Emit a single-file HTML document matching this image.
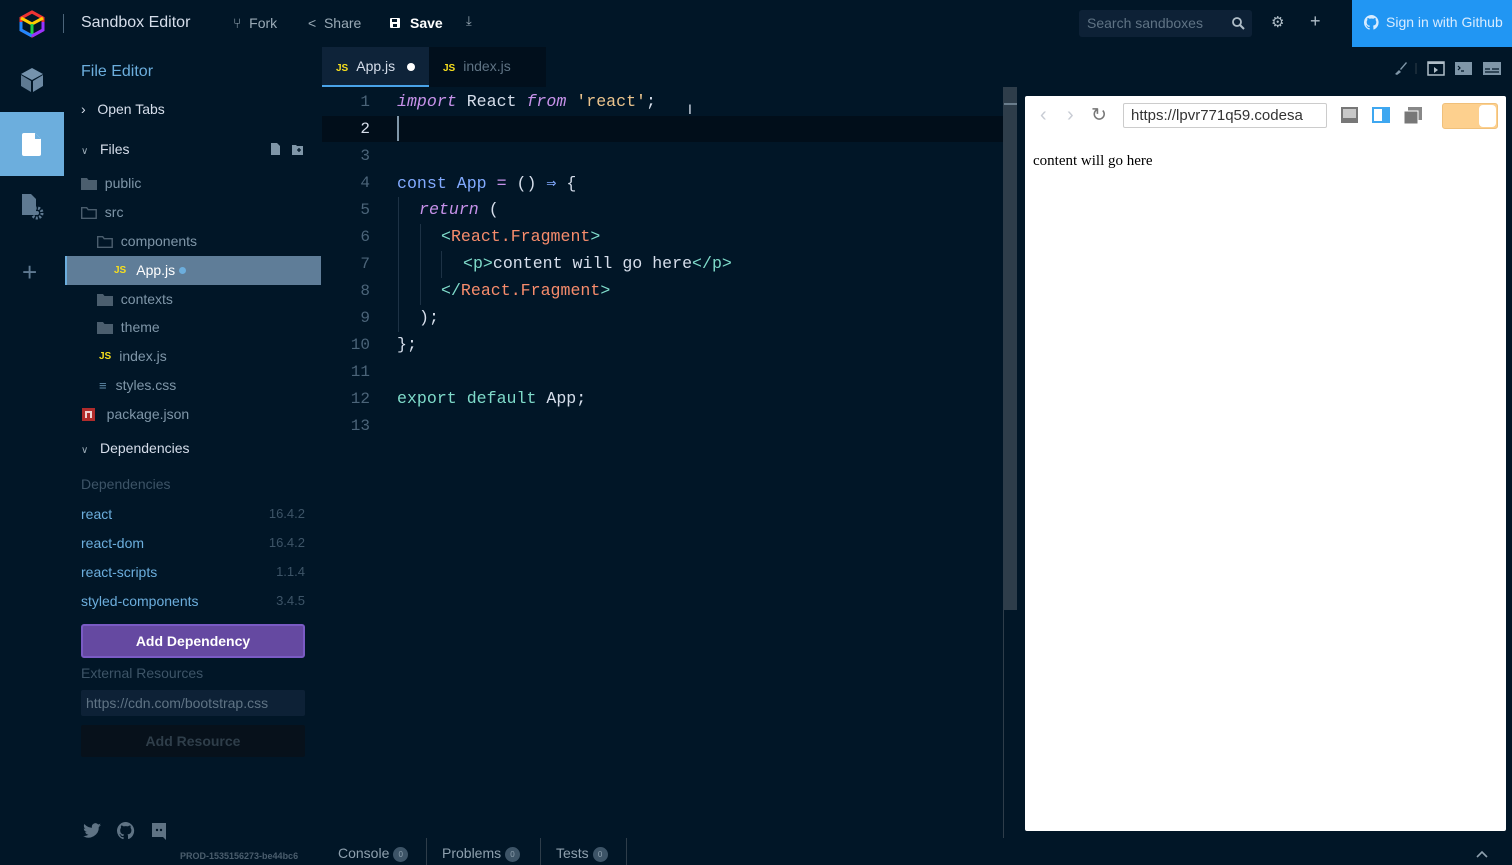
<!DOCTYPE html>
<html><head><meta charset="utf-8"><style>
*{box-sizing:border-box;margin:0;padding:0}
body{width:1512px;height:865px;background:#011627;font-family:"Liberation Sans",sans-serif;position:relative;overflow:hidden;color:#d6deeb}
.a{position:absolute}
.ln{position:absolute;left:330px;width:40px;text-align:right;color:#4b6479;font-family:"Liberation Mono",monospace;font-size:16px}
.cl{position:absolute;left:397px;white-space:pre;font-family:"Liberation Mono",monospace;font-size:16.6px;color:#d6deeb}
.tr{position:absolute;font-size:14px;color:#637777;display:flex;align-items:center}
.tr span{color:#7f96a8}
.dep{position:absolute;left:81px;width:224px;font-size:14px;color:#6caedd;display:flex;justify-content:space-between}
.dep i{font-style:normal;color:#3d5467;font-size:13px}
.js{color:#f7df1e;font-weight:bold;font-size:10px;margin-right:8px}
</style></head><body>
<svg class="a" style="left:18px;top:10px" width="28" height="28" viewBox="0 0 28 28">
<polygon points="14,2 25,8 25,20 14,26 3,20 3,8" fill="none" stroke="#e33" stroke-width="3"/>
<polyline points="3,8 14,14 25,8" fill="none" stroke="#fc0" stroke-width="3"/>
<line x1="14" y1="14" x2="14" y2="26" stroke="#2c4" stroke-width="3"/>
<polyline points="3,12 3,20 14,26" fill="none" stroke="#28f" stroke-width="3"/>
<polyline points="25,12 25,20 14,26" fill="none" stroke="#93f" stroke-width="3"/>
</svg>
<div class="a" style="left:63px;top:14px;width:1px;height:19px;background:#4b6479"></div>
<div class="a" style="left:81px;top:14px;font-size:16px;color:#d6deeb">Sandbox Editor</div>
<div class="a" style="left:233px;top:15px;font-size:14px;color:#9aaab6">&#x2442;&nbsp; Fork</div>
<div class="a" style="left:308px;top:15px;font-size:14px;color:#9aaab6">&lt;&nbsp; Share</div>
<svg class="a" style="left:389px;top:17px" width="12" height="12"><rect x="1" y="1" width="10" height="10" rx="1" fill="#fff"/><rect x="3" y="2" width="5" height="3" fill="#011627"/><rect x="4" y="7" width="4" height="3" fill="#011627"/></svg>
<div class="a" style="left:410px;top:15px;font-size:14px;color:#fff;font-weight:bold">Save</div>
<div class="a" style="left:466px;top:13px;font-size:13px;color:#9aaab6">&#x2913;</div>
<div class="a" style="left:1079px;top:10px;width:173px;height:27px;background:#0d2136;border-radius:3px"></div>
<div class="a" style="left:1087px;top:15px;font-size:14px;color:#5f7384">Search sandboxes</div>
<svg class="a" style="left:1232px;top:17px" width="13" height="13"><circle cx="5" cy="5" r="4" fill="none" stroke="#b0bec8" stroke-width="1.8"/><line x1="8" y1="8" x2="12" y2="12" stroke="#b0bec8" stroke-width="2"/></svg>
<div class="a" style="left:1271px;top:13px;font-size:15px;color:#b0bec8">&#x2699;</div>
<div class="a" style="left:1310px;top:11px;font-size:18px;color:#b0bec8">+</div>
<div class="a" style="left:1352px;top:0;width:160px;height:47px;background:#2196f3"></div>
<svg class="a" style="left:1364px;top:15px" width="15" height="15" viewBox="0 0 16 16"><path fill="#d8ecff" d="M8 0a8 8 0 0 0-2.5 15.6c.4 0 .5-.2.5-.4v-1.5c-2.2.5-2.7-1-2.7-1-.4-.9-.9-1.2-.9-1.2-.7-.5.1-.5.1-.5.8.1 1.2.8 1.2.8.7 1.3 1.9.9 2.300.7.1-.5.3-.9.5-1.100-1.800-.2-3.600-.9-3.600-4 0-.9.3-1.600.8-2.100-.1-.2-.4-1 .1-2.100 0 0 .7-.2 2.200.8a7.500 7.500 0 0 1 4 0c1.500-1 2.200-.8 2.200-.8.4 1.100.2 1.900.1 2.100.5.6.8 1.300.8 2.100 0 3.100-1.900 3.700-3.600 3.900.3.3.5.8.5 1.500v2.200c0 .2.1.5.6.4A8 8 0 0 0 8 0z"/></svg>
<div class="a" style="left:1386px;top:14px;font-size:14px;color:#d8ecff">Sign in with Github</div>

<svg class="a" style="left:20px;top:67px" width="24" height="26" viewBox="0 0 24 26"><polygon points="12,1 23,7 12,13 1,7" fill="#7593ad"/><polygon points="1,8 11,14 11,25 1,19" fill="#5f7a92"/><polygon points="23,8 13,14 13,25 23,19" fill="#6c89a3"/></svg>
<div class="a" style="left:0;top:112px;width:64px;height:64px;background:#6caedd"></div>
<svg class="a" style="left:22px;top:133px" width="20" height="23"><path d="M2 0h11l6 6v15a2 2 0 0 1-2 2H2a2 2 0 0 1-2-2V2a2 2 0 0 1 2-2z" fill="#fff"/><path d="M13 0v6h6z" fill="#6caedd"/></svg>
<svg class="a" style="left:20px;top:194px" width="25" height="26"><path d="M2 0h9l5 5v16H2z" fill="#5f7a92"/><circle cx="17" cy="19" r="5" fill="none" stroke="#5f7a92" stroke-width="3" stroke-dasharray="2 1.5"/><circle cx="17" cy="19" r="2" fill="#5f7a92"/></svg>
<div class="a" style="left:22px;top:257px;font-size:26px;color:#5f7a92;font-weight:300">+</div>

<div class="a" style="left:81px;top:63px;font-size:16px;color:#6caedd">File Editor</div>
<div class="a" style="left:81px;top:101px;font-size:14px;color:#d6deeb">&#x203A;&nbsp;&nbsp; Open Tabs</div>
<div class="a" style="left:81px;top:141px;font-size:14px;color:#d6deeb"><span style="font-size:10px;color:#9aaab6">&#x2228;</span>&nbsp;&nbsp; Files</div>
<svg class="a" style="left:271px;top:143px" width="36" height="13"><path d="M0 0h6l3 3v9H0z" fill="#7f96a8"/><path d="M21 2h4l1 1h6v9H21z" fill="#7f96a8"/><path d="M26 7h4M28 5v4" stroke="#011627" stroke-width="1.3"/></svg>

<div class="tr" style="left:81px;top:175px"><svg width="16" height="13"><path d="M0 1h6l1.5 2H16v10H0z" fill="#4b5e6e"/></svg>&nbsp;&nbsp;<span>public</span></div>
<div class="tr" style="left:81px;top:204px"><svg width="16" height="13"><path d="M.7 1.7h5l1.5 2h8v8.6H.7z" fill="none" stroke="#4b5e6e" stroke-width="1.4"/></svg>&nbsp;&nbsp;<span>src</span></div>
<div class="tr" style="left:97px;top:233px"><svg width="16" height="13"><path d="M.7 1.7h5l1.5 2h8v8.6H.7z" fill="none" stroke="#4b5e6e" stroke-width="1.4"/></svg>&nbsp;&nbsp;<span>components</span></div>
<div class="a" style="left:65px;top:256px;width:256px;height:29px;background:#5f7d98;border-left:2px solid #6caedd"></div>
<div class="tr" style="left:114px;top:262px"><b class="js" style="margin-right:10px">JS</b><span style="color:#fff">App.js</span>&nbsp;<span style="display:inline-block;width:7px;height:7px;border-radius:50%;background:#6caedd"></span></div>
<div class="tr" style="left:97px;top:291px"><svg width="16" height="13"><path d="M0 1h6l1.5 2H16v10H0z" fill="#4b5e6e"/></svg>&nbsp;&nbsp;<span>contexts</span></div>
<div class="tr" style="left:97px;top:319px"><svg width="16" height="13"><path d="M0 1h6l1.5 2H16v10H0z" fill="#4b5e6e"/></svg>&nbsp;&nbsp;<span>theme</span></div>
<div class="tr" style="left:99px;top:348px"><b class="js">JS</b><span>index.js</span></div>
<div class="tr" style="left:99px;top:377px"><span style="color:#5f8aa8;font-weight:bold;font-size:13px;margin-right:9px">&#x2261;</span><span>styles.css</span></div>
<div class="tr" style="left:82px;top:406px"><svg width="13" height="13"><rect width="13" height="13" fill="#b02c2c"/><path d="M3 10V3h7v7H8V5H5v5z" fill="#fff" opacity=".8"/></svg>&nbsp;&nbsp;&nbsp;<span>package.json</span></div>
<div class="a" style="left:81px;top:440px;font-size:14px;color:#d6deeb"><span style="font-size:10px;color:#9aaab6">&#x2228;</span>&nbsp;&nbsp; Dependencies</div>
<div class="a" style="left:81px;top:476px;font-size:14px;color:#3d5467">Dependencies</div>
<div class="dep" style="top:506px">react<i>16.4.2</i></div>
<div class="dep" style="top:535px">react-dom<i>16.4.2</i></div>
<div class="dep" style="top:564px">react-scripts<i>1.1.4</i></div>
<div class="dep" style="top:593px">styled-components<i>3.4.5</i></div>
<div class="a" style="left:81px;top:624px;width:224px;height:34px;background:#6549a1;border:2px solid #7a5bc4;border-radius:3px;color:#fff;font-weight:bold;font-size:14px;text-align:center;line-height:30px">Add Dependency</div>
<div class="a" style="left:81px;top:665px;font-size:14px;color:#3d5467">External Resources</div>
<div class="a" style="left:81px;top:690px;width:224px;height:26px;background:#0d2136;border-radius:2px;font-size:14px;color:#5f7384;padding:5px 5px">https://cdn.com/bootstrap.css</div>
<div class="a" style="left:81px;top:725px;width:224px;height:32px;background:#07111b;border-radius:2px;font-size:14px;color:#2f3e4a;font-weight:bold;text-align:center;line-height:32px">Add Resource</div>
<svg class="a" style="left:82px;top:822px" width="88" height="18">
<path fill="#5f7384" d="M19 3c-.7.3-1.4.5-2.1.6.8-.5 1.3-1.2 1.6-2-.7.4-1.5.7-2.3.9a3.6 3.6 0 0 0-6.2 3.3C6.9 5.6 4.2 4.2 2.4 2c-1 1.7-.5 3.8 1.1 4.9-.6 0-1.2-.2-1.7-.5 0 1.8 1.3 3.3 3 3.6-.5.1-1.1.2-1.7.1.5 1.5 1.9 2.5 3.4 2.5A7.3 7.3 0 0 1 1 14a10.3 10.3 0 0 0 15.8-9.1c.9-.5 1.6-1.2 2.2-1.9z"/>
<path fill="#5f7384" transform="translate(35,0) scale(1.1)" d="M8 0a8 8 0 0 0-2.5 15.6c.4 0 .5-.2.5-.4v-1.5c-2.2.5-2.7-1-2.7-1-.4-.9-.9-1.2-.9-1.2-.7-.5.1-.5.1-.5.8.1 1.2.8 1.2.8.7 1.3 1.9.9 2.3.7.1-.5.3-.9.5-1.1-1.8-.2-3.6-.9-3.6-4 0-.9.3-1.6.8-2.1-.1-.2-.4-1 .1-2.1 0 0 .7-.2 2.2.8a7.5 7.5 0 0 1 4 0c1.5-1 2.2-.8 2.2-.8.4 1.1.2 1.9.1 2.1.5.6.8 1.3.8 2.1 0 3.1-1.9 3.7-3.6 3.9.3.3.5.8.5 1.5v2.2c0 .2.1.5.6.4A8 8 0 0 0 8 0z"/>
<path fill="#5f7384" d="M70 1h14v17l-3-3H70z"/><circle cx="75" cy="8" r="1.2" fill="#011627"/><circle cx="79" cy="8" r="1.2" fill="#011627"/>
</svg>
<div class="a" style="left:180px;top:851px;font-size:9px;color:#4b5e6e;font-weight:bold">PROD-1535156273-be44bc6</div>

<div class="a" style="left:322px;top:47px;width:107px;height:40px;background:#0e2339;border-bottom:2px solid #4aa3e8"></div>
<div class="a" style="left:336px;top:58px;font-size:14px;color:#d6deeb"><b class="js">JS</b>App.js</div>
<div class="a" style="left:407px;top:63px;width:8px;height:8px;border-radius:50%;background:#fff"></div>
<div class="a" style="left:429px;top:47px;width:117px;height:40px;background:#010f1c"></div>
<div class="a" style="left:443px;top:58px;font-size:14px;color:#5f7384"><b class="js">JS</b>index.js</div>
<svg class="a" style="left:1393px;top:61px" width="110" height="15"><path d="M2 13l4-4 2 2-4 3zM7 8l6-7 1 1-6 7z" fill="#7f96a8"/><line x1="23" y1="2" x2="23" y2="13" stroke="#2e3d4a"/>
<rect x="35" y="1" width="16" height="13" fill="none" stroke="#b0bec8" stroke-width="1.5"/><rect x="35" y="1" width="16" height="2" fill="#b0bec8"/><path d="M41 6l4 3-4 3z" fill="#b0bec8"/>
<rect x="62" y="1" width="17" height="13" fill="#7f96a8"/><path d="M65 5l2 2-2 2M68 10h3" stroke="#011627" fill="none" stroke-width="1.2"/>
<rect x="90" y="1" width="18" height="13" fill="#7f96a8"/><path d="M92 8h5M99 8h7M92 11h14" stroke="#011627" stroke-width="1.2"/></svg>

<div class="a" style="left:322px;top:116px;width:681px;height:26px;background:#010e1a"></div>
<div class="a" style="left:397px;top:116px;width:2px;height:25px;background:#7f96a8"></div>
<div class="a" style="left:398px;top:197px;width:1px;height:135px;background:#1d3245"></div>
<div class="a" style="left:420px;top:224px;width:1px;height:81px;background:#1d3245"></div>
<div class="a" style="left:441px;top:251px;width:1px;height:27px;background:#1d3245"></div>
<div class="ln" style="top:93px">1</div><div class="ln" style="top:120px;color:#d6deeb">2</div><div class="ln" style="top:147px">3</div><div class="ln" style="top:174px">4</div><div class="ln" style="top:201px">5</div><div class="ln" style="top:228px">6</div><div class="ln" style="top:255px">7</div><div class="ln" style="top:282px">8</div><div class="ln" style="top:309px">9</div><div class="ln" style="top:336px">10</div><div class="ln" style="top:363px">11</div><div class="ln" style="top:390px">12</div><div class="ln" style="top:417px">13</div>
<div class="cl" style="top:92px"><i style="color:#c792ea">import</i> React <i style="color:#c792ea">from</i> <span style="color:#ecc48d">'react'</span>;</div>
<div class="cl" style="top:173px"><span style="color:#82aaff">const</span> <span style="color:#82aaff">App</span> <span style="color:#c792ea">=</span> () <span style="color:#82aaff">&#x21D2;</span> {</div>
<div class="cl" style="top:200px;left:419px"><i style="color:#c792ea">return</i> (</div>
<div class="cl" style="top:227px;left:441px"><span style="color:#7fdbca">&lt;</span><span style="color:#f78c6c">React.Fragment</span><span style="color:#7fdbca">&gt;</span></div>
<div class="cl" style="top:254px;left:463px"><span style="color:#7fdbca">&lt;p&gt;</span>content will go here<span style="color:#7fdbca">&lt;/p&gt;</span></div>
<div class="cl" style="top:281px;left:441px"><span style="color:#7fdbca">&lt;/</span><span style="color:#f78c6c">React.Fragment</span><span style="color:#7fdbca">&gt;</span></div>
<div class="cl" style="top:308px;left:419px">);</div>
<div class="cl" style="top:335px">};</div>
<div class="cl" style="top:389px"><span style="color:#7fdbca">export</span> <span style="color:#7fdbca">default</span> App;</div>
<div class="a" style="left:688px;top:101px;font-size:14px;color:#d6deeb">I</div>

<div class="a" style="left:1003px;top:87px;width:14px;height:523px;background:#2e3d4a"></div>
<div class="a" style="left:1004px;top:103px;width:13px;height:2px;background:#6a7d8c"></div>
<div class="a" style="left:1003px;top:610px;width:1px;height:228px;background:#2e3d4a"></div>

<div class="a" style="left:1025px;top:96px;width:481px;height:735px;background:#fff;border-radius:2px"></div>
<div class="a" style="left:1040px;top:104px;font-size:20px;color:#c8ccd4">&#x2039;</div>
<div class="a" style="left:1067px;top:104px;font-size:20px;color:#c8ccd4">&#x203A;</div>
<div class="a" style="left:1091px;top:104px;font-size:19px;color:#777">&#x21BB;</div>
<div class="a" style="left:1123px;top:103px;width:204px;height:25px;border:1px solid #ccc;border-radius:2px;font-size:15px;color:#333;padding:3px 7px;overflow:hidden;white-space:nowrap">https://lpvr771q59.codesa</div>
<svg class="a" style="left:1341px;top:107px" width="84" height="18"><rect x="0" y="0" width="17" height="16" fill="#777"/><rect x="2" y="2" width="13" height="9" fill="#fff" opacity=".6"/><rect x="31" y="0" width="18" height="16" fill="#3ea7f0"/><rect x="33" y="2" width="8" height="12" fill="#fff"/><rect x="67" y="0" width="14" height="13" fill="#888"/><rect x="63" y="4" width="14" height="13" fill="#777" stroke="#fff"/></svg>
<div class="a" style="left:1442px;top:103px;width:56px;height:26px;background:#fdd08e;border:1px solid #f0c07a;border-radius:3px"></div>
<div class="a" style="left:1479px;top:105px;width:17px;height:22px;background:#fff;border-radius:4px"></div>
<div class="a" style="left:1033px;top:153px;font-family:'Liberation Serif',serif;font-size:15px;color:#000">content will go here</div>

<div class="a" style="left:338px;top:845px;font-size:14px;color:#8ea0ae">Console <span style="display:inline-block;width:15px;height:15px;border-radius:50%;background:#3d5467;font-size:8px;text-align:center;line-height:15px;vertical-align:middle">0</span></div>
<div class="a" style="left:426px;top:838px;width:1px;height:27px;background:#2e3d4a"></div>
<div class="a" style="left:442px;top:845px;font-size:14px;color:#8ea0ae">Problems <span style="display:inline-block;width:15px;height:15px;border-radius:50%;background:#3d5467;font-size:8px;text-align:center;line-height:15px;vertical-align:middle">0</span></div>
<div class="a" style="left:540px;top:838px;width:1px;height:27px;background:#2e3d4a"></div>
<div class="a" style="left:556px;top:845px;font-size:14px;color:#8ea0ae">Tests <span style="display:inline-block;width:15px;height:15px;border-radius:50%;background:#3d5467;font-size:8px;text-align:center;line-height:15px;vertical-align:middle">0</span></div>
<div class="a" style="left:626px;top:838px;width:1px;height:27px;background:#2e3d4a"></div>
<svg class="a" style="left:1476px;top:850px" width="12" height="8"><path d="M1 7l5-5 5 5" fill="none" stroke="#8ea0ae" stroke-width="1.6"/></svg>
</body></html>
